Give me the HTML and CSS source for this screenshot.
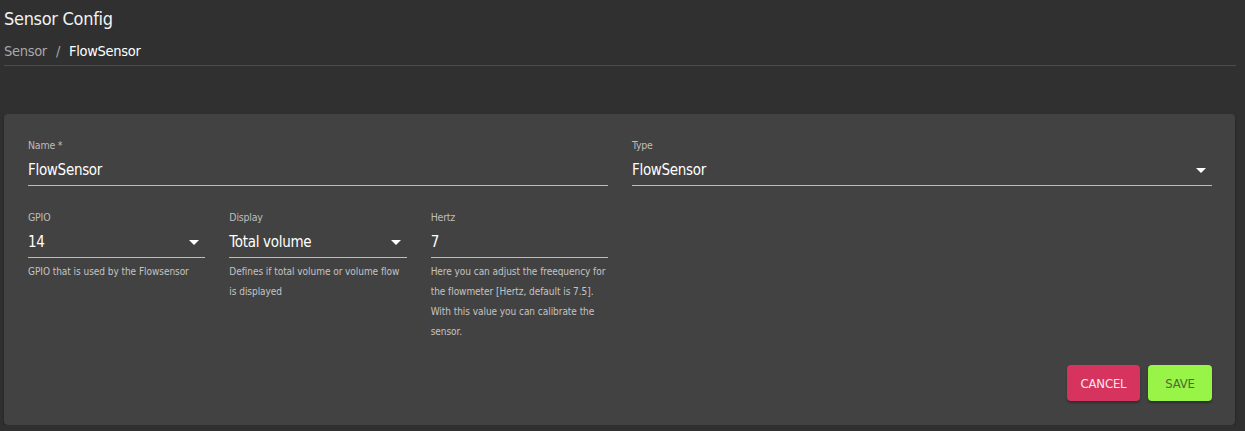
FILE: index.html
```html
<!DOCTYPE html>
<html lang="en">
<head>
<meta charset="utf-8">
<title>Sensor Config</title>
<link rel="stylesheet" href="styles.css">
</head>
<body>
<div class="page">
  <header class="header">
    <h1 class="title">Sensor Config</h1>
    <nav class="crumbs"><span class="crumb-muted">Sensor</span><span class="crumb-sep">/</span><span class="crumb-current">FlowSensor</span></nav>
  </header>

  <section class="card">
    <div class="grid">
      <div class="field span3">
        <label class="label">Name *</label>
        <div class="control"><span class="value">FlowSensor</span></div>
      </div>
      <div class="field span3">
        <label class="label">Type</label>
        <div class="control"><span class="value">FlowSensor</span><span class="caret"></span></div>
      </div>

      <div class="field">
        <label class="label">GPIO</label>
        <div class="control"><span class="value">14</span><span class="caret"></span></div>
        <p class="hint">GPIO that is used by the Flowsensor</p>
      </div>
      <div class="field">
        <label class="label">Display</label>
        <div class="control"><span class="value">Total volume</span><span class="caret"></span></div>
        <p class="hint">Defines if total volume or volume flow is displayed</p>
      </div>
      <div class="field">
        <label class="label">Hertz</label>
        <div class="control"><span class="value">7</span></div>
        <p class="hint">Here you can adjust the freequency for the flowmeter [Hertz, default is 7.5]. With this value you can calibrate the sensor.</p>
      </div>
    </div>

    <div class="actions">
      <button class="btn btn-cancel">CANCEL</button>
      <button class="btn btn-save">SAVE</button>
    </div>
  </section>
</div>
</body>
</html>
```

FILE: styles.css
```css
* { box-sizing: border-box; }

html, body {
  margin: 0;
  background: #303030;
}

body {
  font-family: "DejaVu Sans Condensed", "DejaVu Sans", sans-serif;
  color: #ffffff;
}

.page {
  padding: 6px 9px 0 4px;
}

.title {
  margin: 0;
  font-size: 18px;
  font-weight: 400;
  line-height: 26px;
  letter-spacing: -0.3px;
  color: #f2f2f2;
}

.crumbs {
  margin-top: 10px;
  padding-bottom: 5px;
  border-bottom: 1px solid #4c4c4c;
  font-size: 14.5px;
  line-height: 18px;
  letter-spacing: -0.3px;
  display: flex;
  align-items: center;
}

.crumb-muted { color: #a8a8a8; }
.crumb-sep { color: #a8a8a8; margin: 0 9px; }
.crumb-current { color: #ffffff; }

.card {
  margin-top: 48px;
  background: #424242;
  border-radius: 4px;
  box-shadow: 0 2px 3px rgba(0,0,0,0.35);
  padding: 24px 23px 24px 24px;
  margin-right: 1px;
}

.grid {
  display: grid;
  grid-template-columns: repeat(6, 1fr);
  column-gap: 24px;
  row-gap: 24px;
}

.field {
  display: flex;
  flex-direction: column;
}

.span3 { grid-column: span 3; }

.label {
  font-size: 10.5px;
  line-height: 14px;
  letter-spacing: -0.2px;
  color: #bdbdbd;
}

.control {
  display: flex;
  align-items: center;
  justify-content: space-between;
  padding: 10px 0 6px;
  border-bottom: 1px solid #bdbdbd;
}

.value {
  font-size: 15px;
  line-height: 17px;
  letter-spacing: -0.3px;
  color: #ffffff;
}

.caret {
  width: 0;
  height: 0;
  margin-right: 6px;
  border-left: 5px solid transparent;
  border-right: 5px solid transparent;
  border-top: 5px solid #ffffff;
}

.hint {
  margin: 4px 0 0;
  font-size: 10px;
  line-height: 20px;
  letter-spacing: -0.05px;
  color: #c4c4c4;
}

.actions {
  display: flex;
  justify-content: flex-end;
  gap: 8px;
  margin-top: 23px;
}

.btn {
  height: 36px;
  border: none;
  border-radius: 4px;
  font-family: inherit;
  font-size: 13px;
  letter-spacing: -0.2px;
  padding: 0;
  box-shadow: 0 2px 2px rgba(0,0,0,0.3);
}

.btn-cancel {
  width: 73px;
  background: #d6345f;
  color: #f5e9ec;
}

.btn-save {
  width: 64px;
  background: #98f446;
  color: #4d6b32;
}
```
